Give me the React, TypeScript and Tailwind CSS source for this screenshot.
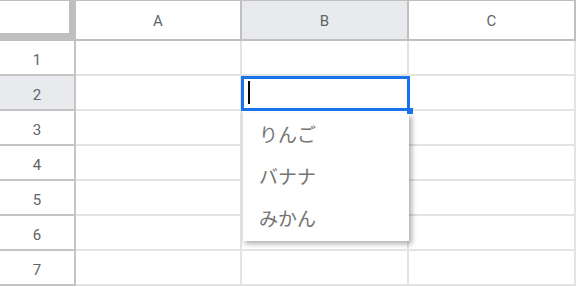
import React from 'react';

const COLS = [
  { key: 'A', width: 'w-[166px]' },
  { key: 'B', width: 'w-[167px]' },
  { key: 'C', width: 'w-[167px]' },
];

const ROWS = [1, 2, 3, 4, 5, 6, 7];

const OPTIONS = ['りんご', 'バナナ', 'みかん'];

const Sheet: React.FC = () => {
  return (
    <div className="relative w-[576px] h-[287px] overflow-hidden bg-white border-t border-[#c0c0c0] font-['Roboto','Noto_Sans_CJK_JP',sans-serif]">
      {/* column headers */}
      <div className="flex h-[40px]">
        <div className="w-[76px] shrink-0 border-r-2 border-b-2 border-[#c0c0c0] bg-white">
          <div className="h-[38px] w-[74px] border-r-[5px] border-b-[6px] border-[#bfbfbf]" />
        </div>
        {COLS.map((c) => (
          <div
            key={c.key}
            className={`${c.width} shrink-0 flex items-center justify-center pt-[3px] border-r-2 border-b-2 border-[#c0c0c0] text-[15px] text-[#5f6368] ${
              c.key === 'B' ? 'bg-[#e8eaed]' : 'bg-white'
            }`}
          >
            {c.key}
          </div>
        ))}
      </div>

      {/* rows */}
      {ROWS.map((r) => (
        <div key={r} className="flex h-[35px]">
          <div
            className={`w-[76px] shrink-0 flex items-center justify-center pt-[5px] border-r-2 border-b-2 border-[#c4c4c4] text-[15px] text-[#5f6368] ${
              r === 2 ? 'bg-[#e8eaed]' : 'bg-white'
            }`}
          >
            {r}
          </div>
          {COLS.map((c) => (
            <div
              key={c.key}
              className={`${c.width} shrink-0 border-r-2 border-b-2 border-[#e2e3e3]`}
            />
          ))}
        </div>
      ))}

      {/* active cell B2 with its dropdown */}
      <div className="absolute left-[241px] top-[75px] flex flex-col">
        <div className="relative w-[169px] h-[35px] flex items-center pl-[4px] pb-[3px] border-[3px] border-[#1a73e8] bg-white">
          <div className="w-[2px] h-[23px] bg-black" />
          <div className="absolute -right-[6px] -bottom-[6px] w-[6px] h-[6px] bg-[#1a73e8]" />
        </div>
        <div className="ml-[1px] mt-[2px] w-[167px] pb-[2px] bg-white border-l border-[#e0e0e0] shadow-[3px_3px_5px_rgba(0,0,0,0.3)] font-['Noto_Sans_CJK_JP',sans-serif]">
          {OPTIONS.map((o) => (
            <div
              key={o}
              className="h-[42px] flex items-center pl-[16px] text-[19px] text-[#757575]"
            >
              {o}
            </div>
          ))}
        </div>
      </div>
    </div>
  );
};

export default function App() {
  return <Sheet />;
}
